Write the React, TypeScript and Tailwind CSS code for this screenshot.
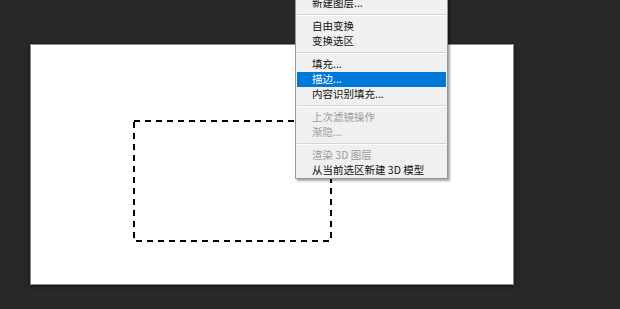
import React from "react";

type Item =
  | { kind: "item"; label: string; disabled?: boolean; active?: boolean }
  | { kind: "sep" };

const menuItems: Item[] = [
  { kind: "item", label: "新建图层..." },
  { kind: "sep" },
  { kind: "item", label: "自由变换" },
  { kind: "item", label: "变换选区" },
  { kind: "sep" },
  { kind: "item", label: "填充..." },
  { kind: "item", label: "描边...", active: true },
  { kind: "item", label: "内容识别填充..." },
  { kind: "sep" },
  { kind: "item", label: "上次滤镜操作", disabled: true },
  { kind: "item", label: "渐隐...", disabled: true },
  { kind: "sep" },
  { kind: "item", label: "渲染 3D 图层", disabled: true },
  { kind: "item", label: "从当前选区新建 3D 模型" },
];

function ContextMenu() {
  return (
    <div
      className="absolute left-[295px] top-[-5px] w-[153px] bg-[#f0f0f0] border border-[#979797] shadow-[2px_2px_2px_rgba(0,0,0,0.35)] flex flex-col"
      style={{ fontFamily: "'Noto Sans CJK SC', 'Liberation Sans', sans-serif" }}
    >
      {menuItems.map((item, i) =>
        item.kind === "sep" ? (
          <div key={i} className="h-[8px] flex flex-col justify-center px-[1px]">
            <div className="h-[1px] bg-[#d4d4d4]" />
            <div className="h-[1px] bg-white" />
          </div>
        ) : (
          <div
            key={i}
            className={`h-[15px] mx-[1px] pl-[15px] flex items-center text-[10.5px] leading-none whitespace-nowrap ${
              item.active
                ? "bg-[#0078d7] text-white"
                : item.disabled
                ? "text-[#9b9b9b]"
                : "text-[#111111]"
            }`}
          >
            {item.label}
          </div>
        )
      )}
    </div>
  );
}

export default function App() {
  return (
    <div className="relative w-[620px] h-[309px] bg-[#282828] overflow-hidden pt-[44px] pl-[30px]">
      {/* Canvas */}
      <div className="relative w-[484px] h-[241px] bg-white border border-[#8c8c8c] shadow-[0_1px_4px_rgba(0,0,0,0.6)]">
        {/* marching ants selection */}
        <svg
          className="absolute left-[102px] top-[75px]"
          width="200"
          height="123"
          viewBox="0 0 200 123"
        >
          <rect
            x="1"
            y="1"
            width="197"
            height="120"
            fill="none"
            stroke="#ffffff"
            strokeWidth="2"
          />
          <rect
            x="1"
            y="1"
            width="197"
            height="120"
            fill="none"
            stroke="#000000"
            strokeWidth="2"
            strokeDasharray="6 5"
          />
        </svg>
      </div>
      <ContextMenu />
    </div>
  );
}
